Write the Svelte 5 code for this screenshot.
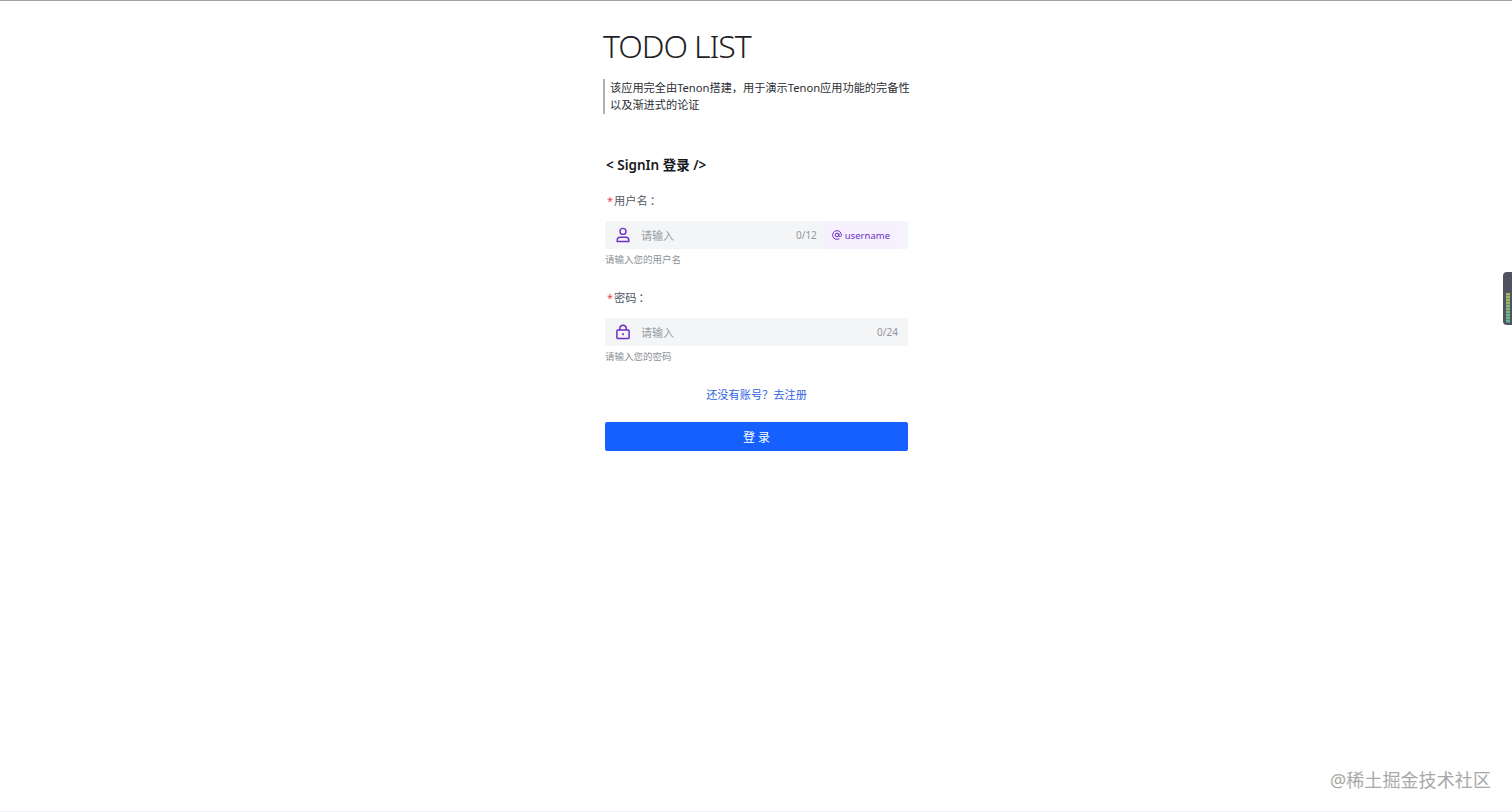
<script lang="ts">
  let username = $state("");
  let password = $state("");

  const fields = [
    { key: "username", label: "用户名", hint: "请输入您的用户名", max: 12, icon: "user", addon: "username" },
    { key: "password", label: "密码", hint: "请输入您的密码", max: 24, icon: "lock", addon: "" },
  ];
</script>

<div class="page">
  <main class="content">
    <h1 class="title">TODO LIST</h1>
    <blockquote class="intro">该应用完全由Tenon搭建，用于演示Tenon应用功能的完备性以及渐进式的论证</blockquote>

    <form class="form" onsubmit={(e) => e.preventDefault()}>
      <h3 class="form-title">&lt; SignIn 登录 /&gt;</h3>

      {#each fields as field}
        <div class="field">
          <div class="label"><span class="star">*</span>{field.label}<span class="colon">：</span></div>
          <div class="control">
            <span class="prefix">
              {#if field.icon === "user"}
                <svg viewBox="0 0 16 16" width="16" height="16" fill="none" stroke="currentColor" stroke-width="1.4">
                  <circle cx="8" cy="4.4" r="3" />
                  <path d="M2.2 13.2c0-1.9 1.3-3 3-3h5.6c1.7 0 3 1.1 3 3v1.3H2.2z" />
                </svg>
              {:else}
                <svg viewBox="0 0 16 16" width="16" height="16" fill="none" stroke="currentColor" stroke-width="1.5">
                  <rect x="1.9" y="6" width="12.2" height="8.4" rx="0.8" />
                  <path d="M4.8 6V4.4a3.2 3.2 0 0 1 6.4 0V6" />
                  <rect x="7.1" y="9.3" width="1.8" height="1.8" fill="currentColor" stroke="none" />
                </svg>
              {/if}
            </span>
            {#if field.key === "username"}
              <input class="input" placeholder="请输入" bind:value={username} />
              <span class="count">{username.length}/{field.max}</span>
            {:else}
              <input class="input" type="password" placeholder="请输入" bind:value={password} />
              <span class="count">{password.length}/{field.max}</span>
            {/if}
            {#if field.addon}
              <span class="addon">
                <svg viewBox="0 0 16 16" width="10" height="10" fill="none" stroke="currentColor" stroke-width="1.6">
                  <circle cx="8" cy="8" r="3" />
                  <path d="M11 5v4.2a2.2 2.2 0 0 0 4 0V8a7 7 0 1 0-3.2 5.9" />
                </svg>
                {field.addon}
              </span>
            {/if}
          </div>
          <div class="hint">{field.hint}</div>
        </div>
      {/each}

      <a class="link" href="#register">还没有账号？去注册</a>
      <button class="submit" type="submit">登 录</button>
    </form>
  </main>

  <aside class="side-tab"><span class="meter"></span></aside>
  <div class="watermark">@稀土掘金技术社区</div>
</div>

<style>
  :global(body) {
    margin: 0;
    background: #fff;
  }

  .page {
    position: relative;
    height: 812px;
    box-sizing: border-box;
    overflow: hidden;
    border-top: 1px solid #a3a3a3;
    border-bottom: 1px solid #eef4f5;
    font-family: "Noto Sans", "Noto Sans CJK SC", sans-serif;
  }

  .content {
    width: 306px;
    margin: 0 auto;
  }

  .title {
    margin: 0;
    padding-top: 25px;
    font-size: 32px;
    line-height: 40px;
    font-weight: 300;
    letter-spacing: -1.1px;
    color: #1f2225;
  }

  .intro {
    margin: 13px -5px 0 0;
    padding: 0 0 1px 5px;
    border-left: 2px solid #b0b0b0;
    font-size: 11.2px;
    line-height: 17px;
    color: #2b2e33;
  }

  .form {
    display: flex;
    flex-direction: column;
    width: 303px;
    margin: 0 0 0 2px;
    padding-top: 42px;
  }

  .form-title {
    margin: 0;
    padding-left: 1px;
    font-size: 13.5px;
    line-height: 18px;
    font-weight: 600;
    color: #15181c;
  }

  .field {
    height: 97px;
  }

  .form-title + .field {
    margin-top: 17px;
  }

  .label {
    height: 20px;
    font-size: 11.2px;
    line-height: 20px;
    color: #54585e;
  }

  .star {
    margin: 0 1px 0 2px;
    font-size: 11px;
    color: #e5484d;
  }

  .colon {
    margin-left: 2px;
  }

  .control {
    display: flex;
    align-items: center;
    height: 28px;
    margin-top: 10px;
    background: #f3f5f6;
    border-radius: 2px;
  }

  .prefix {
    display: flex;
    width: 36px;
    justify-content: center;
    color: #6d2fc4;
  }

  .input {
    flex: 1;
    min-width: 0;
    border: 0;
    outline: 0;
    padding: 0;
    background: transparent;
    font: inherit;
    font-size: 11px;
  }

  .input::placeholder {
    color: #9a9da3;
  }

  .count {
    padding-right: 10px;
    font-size: 10px;
    color: #93969c;
  }

  .count:has(+ .addon) {
    padding-right: 6px;
  }

  .addon {
    display: flex;
    align-items: center;
    gap: 3px;
    height: 100%;
    margin-right: 6px;
    padding: 0 12px 0 9px;
    background: #f7f0fe;
    font-size: 9.5px;
    color: #6d2fc4;
  }

  .hint {
    margin-top: 4px;
    font-size: 9.5px;
    line-height: 14px;
    color: #8e9298;
  }

  .link {
    margin-top: 1px;
    text-align: center;
    font-size: 11.2px;
    line-height: 18px;
    color: #2f63e0;
    text-decoration: none;
  }

  .submit {
    height: 29px;
    margin-top: 18px;
    border: 0;
    border-radius: 2px;
    background: #1660ff;
    color: #fff;
    font: inherit;
    font-size: 12px;
  }

  .side-tab {
    position: absolute;
    right: 0;
    top: 271px;
    display: flex;
    align-items: flex-end;
    justify-content: flex-end;
    width: 9px;
    height: 53px;
    padding: 0 2px 2px 0;
    box-sizing: border-box;
    border-radius: 4px 0 0 4px;
    background: #50535f;
  }

  .meter {
    width: 4px;
    height: 30px;
    background:
      repeating-linear-gradient(transparent 0 2px, rgba(80, 83, 95, 0.45) 2px 3px),
      linear-gradient(#a9b957, #5fb59a);
  }

  .watermark {
    position: absolute;
    right: 21px;
    bottom: 19px;
    font-size: 18px;
    line-height: 24px;
    letter-spacing: 0.1px;
    color: #a8a8a8;
  }
</style>
